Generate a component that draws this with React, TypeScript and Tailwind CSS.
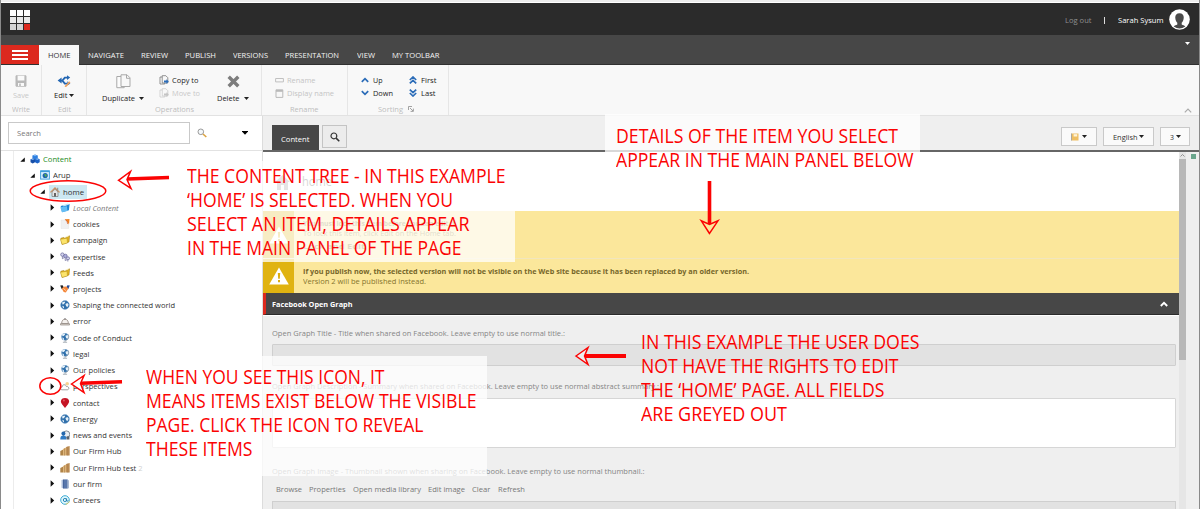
import { useLayoutEffect, useRef, type ReactNode } from "react";

/** Single line of text, condensed or widened to fill a given width. */
function Fit({ w, className = "", children }: { w: number; className?: string; children: ReactNode }) {
  const ref = useRef<HTMLSpanElement>(null);
  useLayoutEffect(() => {
    const el = ref.current;
    if (el && el.offsetWidth) {
      el.style.transform = "none";
      el.style.transform = `scaleX(${w / el.getBoundingClientRect().width})`;
    }
  }, [w]);
  return (
    <span className={"block shrink-0 whitespace-nowrap " + className} style={{ width: w }}>
      <span ref={ref} className="inline-block origin-left align-top">
        {children}
      </span>
    </span>
  );
}

function Caret({ className = "text-[#222]" }: { className?: string }) {
  return (
    <svg className={"shrink-0 " + className} width="5" height="3" viewBox="0 0 5 3">
      <path d="M0 0h5L2.5 3z" fill="currentColor" />
    </svg>
  );
}

type IconName =
  | "cubes" | "app" | "home" | "bluefolder" | "cookie" | "folder" | "people" | "hands" | "globe"
  | "bell" | "stand" | "cloud" | "pin" | "news" | "hub" | "firm" | "at";

function Globe({ r = 4.4, cy = 5 }: { r?: number; cy?: number }) {
  return (
    <>
      <circle cx="5" cy={cy} r={r} fill="#2f6fab" stroke="#7fa9cf" strokeWidth="0.5" />
      <path
        d={`M2 ${cy - 2.6}l2.4-.9.8 1.1-1.5 1.6-1.2.3zM5.4 ${cy - 1}l2-.9 1.3 1.6-1.4 2.6-1.2-1.2zM2.2 ${cy + 0.8}l1.6.5.2 1.6-.9.3z`}
        fill="#e4f0f8"
      />
    </>
  );
}

function drawIcon(name: IconName): ReactNode {
  switch (name) {
    case "cubes":
      return (
        <>
          <path d="M5 .5L7.8 1.5v2.8L5 5.5 2.4 4.3V1.5z" fill="#2d7fe0" />
          <path d="M2.7 4.4L5 5.3v2.9L2.7 9.4.5 8.2V5.3z" fill="#174fa8" />
          <path d="M7.3 4.2l2.4 1v3L7.3 9.4 5 8.2V5.2z" fill="#1b62c7" />
          <path d="M3 1.4l2-.6 2 .6-2 .8zM.9 5.3l1.8-.6 1.8.6-1.8.7zM5.5 5.1l1.8-.6 1.8.6-1.8.8z" fill="#7db6f5" />
        </>
      );
    case "app":
      return (
        <>
          <rect x=".6" y=".9" width="8.8" height="8.2" fill="#d9effc" stroke="#45a4e0" />
          <rect x=".6" y=".5" width="8.8" height="1.6" fill="#3d9ddd" />
          <circle cx="5.2" cy="5.5" r="2.6" fill="#1d64ad" />
          <path d="M4.2 4l2 .2.7 1.7-1.6 1z" fill="#58b14b" />
        </>
      );
    case "home":
      return (
        <>
          <path d="M2 5v4.5h6V5L5 2.2z" fill="#e6e6e6" stroke="#777" strokeWidth=".7" />
          <path d="M.4 5.4L5 1l4.6 4.4" fill="none" stroke="#c98f60" strokeWidth="1.3" />
          <path d="M7.2.8h1v2.6h-1z" fill="#8b8b8b" />
          <path d="M4.1 6h1.8v3.5H4.1z" fill="#555" />
        </>
      );
    case "bluefolder":
      return (
        <>
          <path d="M.7 3l3-.8.6.8L9.6 1 8.9 7.2 2 9.2z" fill="#1f87d6" />
          <path d="M.3 4.2l6.6-1 .5 4.8L2 9.2z" fill="#65bdf4" />
          <path d="M3 2.2l5-1.7.9.9-5.5 2z" fill="#c1e5fb" />
        </>
      );
    case "cookie":
      return (
        <>
          <path d="M1 1h6l1.7 2v6.6H1z" fill="#f0f0f1" stroke="#e0e0e0" strokeWidth=".4" />
          <path d="M5 .2L9.5 0 9 5.5 7.7 3.2z" fill="#f38321" />
          <path d="M5.3.4l1.9 2.3.4 2.2" stroke="#c84f21" strokeWidth=".7" fill="none" />
        </>
      );
    case "folder":
      return (
        <>
          <path d="M.8 3.2l3-.8.6.8L9.6.8 9 7 2.2 9.4z" fill="#e4b51f" stroke="#9a7514" strokeWidth=".5" />
          <path d="M.4 4.3L7 3.2 7.5 8 2 9.4z" fill="#fce46c" stroke="#b28d1d" strokeWidth=".5" />
          <path d="M5.2 2.2l3.6-1.5" stroke="#fff7ca" strokeWidth=".9" />
        </>
      );
    case "people":
      return (
        <g stroke="#626296" strokeWidth=".7">
          <circle cx="2.4" cy="2.6" r="1.7" fill="#d5d5ef" />
          <path d="M2.4 4.3v2.4l1.6-1" fill="none" />
          <circle cx="5.4" cy="4" r="1.8" fill="#aaaadb" />
          <path d="M5.2 5.8v2.7l1.8-.8" fill="none" />
          <circle cx="8" cy="6.3" r="1.5" fill="#d5d5ef" />
          <path d="M7.8 7.8v1.7" fill="none" />
        </g>
      );
    case "hands":
      return (
        <>
          <path d="M.2 1.6l2.4-.3L4 4 1.8 5.2z" fill="#222" />
          <path d="M9.8 1.6l-2.4-.3L6 4l2.2 1.2z" fill="#274b97" />
          <path d="M1.7 4.5L3.8 2.8 6.2 2.6l2.2 2L5.8 8.6 3.7 8z" fill="#f4873b" />
          <path d="M3.4 4.4l2.5 2.2" stroke="#ffd0a4" strokeWidth="1" />
        </>
      );
    case "globe":
      return <Globe />;
    case "bell":
      return (
        <>
          <path d="M1.6 7.6c.2-3 1.3-4.3 3.4-4.3s3.2 1.3 3.4 4.3z" fill="#f4f1ee" stroke="#8b7f78" strokeWidth=".8" />
          <path d="M.4 9h9.2V7.7H.4z" fill="#e7e1dc" stroke="#7d736d" strokeWidth=".6" />
          <path d="M4.3 2.3h1.4v1H4.3z" fill="#777" />
        </>
      );
    case "stand":
      return (
        <>
          <Globe r={3.5} cy={3.8} />
          <path d="M8 1.2c1.6 2.5.6 5.6-3 6.6" stroke="#8b96a1" strokeWidth=".7" fill="none" />
          <path d="M4.5 7.7h1v1h1.6v1H2.9v-1h1.6z" fill="#a8b0b8" />
        </>
      );
    case "cloud":
      return (
        <>
          <circle cx="7.2" cy="2.8" r="1.8" fill="#f7d391" />
          <path d="M2 8.8C-.1 8.5.5 6 2.2 6 2 3.2 5.8 3 6.4 5.5c2.8-.3 3.2 3 1 3.3z" fill="#fff" stroke="#868686" strokeWidth=".8" />
        </>
      );
    case "pin":
      return (
        <>
          <path d="M5 9.9L2.2 6.4C-.8 2.7 1.8.1 5 .1s5.8 2.6 2.8 6.3z" fill="#c51424" />
          <circle cx="3.9" cy="2.6" r="1" fill="#e35a66" />
        </>
      );
    case "news":
      return (
        <>
          <circle cx="6.4" cy="4.3" r="3.4" fill="#e9edf2" stroke="#66717e" strokeWidth=".8" />
          <circle cx="3.4" cy="3.6" r="2" fill="#2467ad" />
          <path d="M.3 9.6c0-3.3 1.2-4 3.1-4s3 .8 3 4z" fill="#2f7ac4" />
          <path d="M6.6 6.3h2.8v3.2H6.6z" fill="#59606a" />
        </>
      );
    case "hub":
      return (
        <>
          <path d="M.3 5l2.9-1.4v6H.3z" fill="#b08448" />
          <path d="M3 3l3-1.4v8H3z" fill="#dfb67a" />
          <path d="M6 .9L9.7 0v9.6H6z" fill="#c2935a" />
          <path d="M4.6 2.3v7.3M7.9.6v9" stroke="#94693a" strokeWidth=".5" />
        </>
      );
    case "firm":
      return (
        <>
          <path d="M1.5 1l2-.6v9L1.5 8.8z" fill="#aebfdc" />
          <path d="M3 .5h4.6v9H3z" fill="#3b5a94" />
          <path d="M7.4.5l1.4.9v7.8l-1.4.4z" fill="#93a8c9" />
          <path d="M3.6 2h3.4M3.6 4h3.4M3.6 6h3.4M3.6 8h3.4" stroke="#a3bce2" strokeWidth=".6" />
        </>
      );
    case "at":
      return (
        <>
          <circle cx="5" cy="5" r="4.3" fill="#e4f8fd" stroke="#28a1cf" strokeWidth=".9" />
          <circle cx="4.9" cy="5" r="1.6" fill="none" stroke="#187aae" strokeWidth=".9" />
          <path d="M6.6 3.3v2.8c.5.8 1.5.2 1.5-1" fill="none" stroke="#187aae" strokeWidth=".8" />
          <path d="M5.6 9.2c2-.2 3.4-1.4 3.7-3" fill="none" stroke="#e2cc62" strokeWidth=".9" />
        </>
      );
  }
}

interface Row {
  label: string;
  icon: IconName;
  w: number;
  level: number;
}

const rows: Row[] = [
  { label: "Content", icon: "cubes", w: 28.5, level: 0 },
  { label: "Arup", icon: "app", w: 17.5, level: 1 },
  { label: "home", icon: "home", w: 21, level: 2 },
  { label: "Local Content", icon: "bluefolder", w: 45.5, level: 3 },
  { label: "cookies", icon: "cookie", w: 26.5, level: 3 },
  { label: "campaign", icon: "folder", w: 34.5, level: 3 },
  { label: "expertise", icon: "people", w: 32.5, level: 3 },
  { label: "Feeds", icon: "folder", w: 21, level: 3 },
  { label: "projects", icon: "hands", w: 28.5, level: 3 },
  { label: "Shaping the connected world", icon: "globe", w: 102, level: 3 },
  { label: "error", icon: "bell", w: 18, level: 3 },
  { label: "Code of Conduct", icon: "stand", w: 59, level: 3 },
  { label: "legal", icon: "stand", w: 16.5, level: 3 },
  { label: "Our policies", icon: "stand", w: 42, level: 3 },
  { label: "perspectives", icon: "cloud", w: 44.5, level: 3 },
  { label: "contact", icon: "pin", w: 26.5, level: 3 },
  { label: "Energy", icon: "globe", w: 24.5, level: 3 },
  { label: "news and events", icon: "news", w: 59, level: 3 },
  { label: "Our Firm Hub", icon: "hub", w: 48.5, level: 3 },
  { label: "Our Firm Hub test 2", icon: "hub", w: 69.5, level: 3 },
  { label: "our firm", icon: "firm", w: 29, level: 3 },
  { label: "Careers", icon: "at", w: 27.5, level: 3 },
];

const indents = ["pl-[6px]", "pl-[16px]", "pl-[26px]", "pl-[36px]"];
const labelColors: Record<string, string> = {
  Content: "text-[#1c8a1c]",
  "Local Content": "italic text-[#777]",
};

function TreeRow({ row }: { row: Row }) {
  const selected = row.label === "home";
  return (
    <div className={"flex h-[16.24px] shrink-0 items-center " + indents[row.level]}>
      <svg width="5" height="7" viewBox="0 0 5 7" className="mr-[4px] shrink-0">
        {row.level < 3 ? <path d="M4.8 1.4v4.4H.3z" fill="#111" /> : <path d="M.6 .3l3.6 3.2L.6 6.7z" fill="#111" />}
      </svg>
      <div className={"flex h-[14px] items-center pl-[1px] pr-[3px] " + (selected ? "bg-[#cde8f2]" : "")}>
        <svg width="10" height="10" viewBox="0 0 10 10" className="mr-[3px] shrink-0">
          {drawIcon(row.icon)}
        </svg>
        <Fit w={row.w} className={labelColors[row.label] ?? "text-[#333]"}>
          {row.label}
        </Fit>
      </div>
    </div>
  );
}

function SearchGlyph() {
  return (
    <svg width="10" height="10" viewBox="0 0 10 10">
      <circle cx="3.9" cy="3.9" r="2.9" fill="none" stroke="#333" strokeWidth="1.2" />
      <path d="M6.1 6.1L9.3 9.3" stroke="#333" strokeWidth="1.5" />
    </svg>
  );
}

function TopBar() {
  return (
    <div className="flex h-[32px] shrink-0 items-center justify-between bg-[#2b2b2b] pl-[9px] pr-[9px]">
      <svg width="20" height="20" viewBox="0 0 20 20" className="mt-[2px]" shapeRendering="crispEdges">
        <path d="M0 0h6v6H0zM7 0h6v6H7zM14 0h6v6h-6z" fill="#fff" />
        <path d="M0 7h6v6H0zM7 7h6v6H7zM14 7h6v6h-6z" fill="#e9e9e9" />
        <path d="M0 14h6v6H0zM7 14h6v6H7z" fill="#d3d3d3" />
        <path d="M14 14h6v6h-6z" fill="#dc291e" />
      </svg>
      <div className="flex items-center">
        <Fit w={26.5} className="mt-[2px] text-[#8f8f8f]">Log out</Fit>
        <span className="ml-[12.5px] mr-[13px] mt-[2px] h-[7px] w-px bg-[#ddd]" />
        <Fit w={45.5} className="mt-[2px] text-white">Sarah Sysum</Fit>
        <svg width="21" height="21" viewBox="0 0 21 21" className="ml-[6px] mt-px">
          <circle cx="10.5" cy="10.5" r="10.3" fill="#fff" />
          <path
            d="M10.5 4.2c-3.2 0-4.5 2.1-4.2 4.8.1 2.2 1 3.8 2 4.8v1.8c-1.2.6-2.6 1-3.6 1.9a10 10 0 0011.6 0c-1-.9-2.4-1.3-3.6-1.9v-1.8c1-1 1.9-2.6 2-4.8.3-2.7-1-4.8-4.2-4.8z"
            fill="#4a4a4a"
          />
        </svg>
      </div>
    </div>
  );
}

const tabs: [string, number, string][] = [
  ["NAVIGATE", 36, "ml-[9px]"],
  ["REVIEW", 27, "ml-[16.5px]"],
  ["PUBLISH", 31, "ml-[17px]"],
  ["VERSIONS", 35, "ml-[17px]"],
  ["PRESENTATION", 54, "ml-[17.5px]"],
  ["VIEW", 18, "ml-[17.5px]"],
  ["MY TOOLBAR", 47.5, "ml-[17px]"],
];

function TabBar() {
  return (
    <div className="flex h-[30px] shrink-0 items-end justify-between border-b border-b-[#303030] bg-[#474747]">
      <div className="flex h-[19px] items-center text-[8px] text-[#f4f4f4]">
        <div className="flex h-[19px] w-[38px] flex-col items-center justify-center gap-[2px] bg-[#dc291e]">
          <span className="h-[2px] w-[16px] bg-white" />
          <span className="h-[2px] w-[16px] bg-white" />
          <span className="h-[2px] w-[16px] bg-white" />
        </div>
        <div className="flex h-[20px] w-[40px] items-center justify-center bg-[#f8f8f8] text-[#333]">
          <Fit w={22.5}>HOME</Fit>
        </div>
        {tabs.map(([label, w, gap]) => (
          <Fit key={label} w={w} className={gap}>
            {label}
          </Fit>
        ))}
      </div>
      <Caret className="mb-[19px] mr-[9px] text-white" />
    </div>
  );
}

function DocIcon({ badge, faded = false }: { badge: string; faded?: boolean }) {
  const c = faded ? "#c9c9c9" : "#777";
  return (
    <svg width="10" height="10" viewBox="0 0 10 10" className="mr-[2.5px] shrink-0">
      <path d="M1 2h4.8v7H1z" fill="#fff" stroke={c} strokeWidth=".8" />
      <path d="M3.2.7h3.6l2 2V8H3.2z" fill="#f8f8f8" stroke={c} strokeWidth=".8" />
      <path d="M5 5.5h2.4V4.2L9.8 6.6 7.4 9V7.6H5z" fill={badge} />
    </svg>
  );
}

function Chevrons({ up, double = false }: { up: boolean; double?: boolean }) {
  return (
    <svg width="8" height="8" viewBox="0 0 8 8" className={"mr-[4px] shrink-0 " + (up ? "" : "rotate-180")}>
      <g fill="none" stroke="#2b6cb8" strokeWidth="1.7">
        {double ? (
          <path d="M.8 4L4 1l3.2 3M.8 7.4L4 4.4l3.2 3" />
        ) : (
          <path d="M.8 5.8L4 2.6l3.2 3.2" />
        )}
      </g>
    </svg>
  );
}

function Ribbon() {
  return (
    <div className="flex h-[51px] shrink-0 justify-between border-b border-b-[#e2e2e2] bg-[#f8f8f8]">
      <div className="flex">
        <div className="flex w-[41px] flex-col items-center border-r border-r-[#e6e6e6] pt-[10px] text-[#c8c8c8]">
          <svg width="12" height="12" viewBox="0 0 12 12">
            <path d="M1 .8h10v10.4H1z" fill="#b9b9b9" stroke="#b9b9b9" strokeWidth="1" />
            <path d="M2.6.8h6.8v4.8H2.6zM3 8h6v3H3z" fill="#fafafa" />
            <path d="M4.2 8.4h1.6V11H4.2z" fill="#b9b9b9" />
          </svg>
          <Fit w={16} className="mt-[3px]">Save</Fit>
          <Fit w={18} className="mt-[4px] text-[#bdbdbd]">Write</Fit>
        </div>
        <div className="flex w-[45px] flex-col items-center border-r border-r-[#e6e6e6] pt-[10px]">
          <svg width="14" height="12" viewBox="0 0 14 12">
            <path d="M3 5.6h2.4M5.4 5.6l2.4-3h3M5.4 5.6l2.4 3h3.4" fill="none" stroke="#2467b3" strokeWidth="1.8" />
            <path d="M4.6 2.6L.6 5.6l4 3zM10 .2l3.2 2.4L10 5zM10.4 6.2l3 2.4-3 2z" fill="#2467b3" />
            <path d="M8.2 11.8l4.6-5" stroke="#eea15d" strokeWidth="1.7" />
          </svg>
          <div className="mt-[3px] flex items-center gap-[1px] text-[#222]">
            <Fit w={13.5}>Edit</Fit>
            <Caret />
          </div>
          <Fit w={13} className="mt-[4px] text-[#bdbdbd]">Edit</Fit>
        </div>
        <div className="flex w-[175px] flex-col border-r border-r-[#e6e6e6] pt-[9px] text-[#222]">
          <div className="flex h-[30px] pl-[15px]">
            <div className="flex w-[42px] flex-col items-center">
              <svg width="15" height="15" viewBox="0 0 15 15">
                <path d="M.8 2.5h7.4v11.2H.8z" fill="#fcfcfc" stroke="#a9a9a9" />
                <path d="M5 .8h6l3 3v8.7H5z" fill="#f8f8f8" stroke="#a9a9a9" />
                <path d="M10.5.8v3.5H14" fill="none" stroke="#a9a9a9" />
              </svg>
              <div className="mt-[4px] flex items-center gap-[4px]">
                <Fit w={33}>Duplicate</Fit>
                <Caret />
              </div>
            </div>
            <div className="ml-[15px] flex w-[42px] flex-col gap-[3px] pt-px">
              <div className="flex items-center">
                <DocIcon badge="#2b6cb8" />
                <Fit w={26.5}>Copy to</Fit>
              </div>
              <div className="flex items-center text-[#c8c8c8]">
                <DocIcon badge="#c4c4c4" faded />
                <Fit w={28}>Move to</Fit>
              </div>
            </div>
            <div className="ml-[16px] flex w-[32px] flex-col items-center">
              <svg width="13" height="13" viewBox="0 0 13 13" className="mt-px">
                <path d="M1.7 1.7l9.6 9.6M11.3 1.7l-9.6 9.6" stroke="#7d7d7d" strokeWidth="3.4" />
              </svg>
              <div className="mt-[5px] flex items-center gap-[5px]">
                <Fit w={22.5}>Delete</Fit>
                <Caret />
              </div>
            </div>
          </div>
          <Fit w={39} className="ml-[68px] text-[#bdbdbd]">Operations</Fit>
        </div>
        <div className="flex w-[86px] flex-col border-r border-r-[#e6e6e6] pl-[13px] pt-[10px] text-[#c4c4c4]">
          <div className="flex items-center">
            <svg width="9" height="8" viewBox="0 0 9 8" className="mr-[3px]">
              <path d="M.6 2.5h7.8v3.4H.6z" fill="none" stroke="#c0c0c0" />
            </svg>
            <Fit w={28.5}>Rename</Fit>
          </div>
          <div className="mt-[3px] flex items-center">
            <svg width="9" height="9" viewBox="0 0 9 9" className="mr-[3px]">
              <path d="M1 .8h6.8v7.6H1z" fill="none" stroke="#b9b9b9" />
              <path d="M1 1h6.8v1.8H1z" fill="#b9b9b9" />
            </svg>
            <Fit w={47}>Display name</Fit>
          </div>
          <Fit w={28.5} className="ml-[15px] mt-[6px] text-[#bdbdbd]">Rename</Fit>
        </div>
        <div className="flex w-[101px] flex-col border-r border-r-[#e6e6e6] pl-[13px] pt-[10px] text-[#222]">
          <div className="flex">
            <div className="flex w-[48px] flex-col gap-[3px]">
              <div className="flex items-center"><Chevrons up /><Fit w={9.5}>Up</Fit></div>
              <div className="flex items-center"><Chevrons up={false} /><Fit w={20}>Down</Fit></div>
            </div>
            <div className="flex flex-col gap-[3px]">
              <div className="flex items-center"><Chevrons up double /><Fit w={15.5}>First</Fit></div>
              <div className="flex items-center"><Chevrons up={false} double /><Fit w={14.5}>Last</Fit></div>
            </div>
          </div>
          <div className="ml-[17px] mt-[6px] flex items-center text-[#bdbdbd]">
            <Fit w={25}>Sorting</Fit>
            <svg width="6" height="6" viewBox="0 0 6 6" className="ml-[5px]">
              <path d="M.5 4V.5H4M2 2l3 3M5.4 2.6v2.8H2.6" fill="none" stroke="#999" strokeWidth=".9" />
            </svg>
          </div>
        </div>
      </div>
      <svg width="8" height="5" viewBox="0 0 8 5" className="mr-[7px] mt-[43px]">
        <path d="M.8 4.4L4 1.2l3.2 3.2" fill="none" stroke="#aaa" strokeWidth="1.2" />
      </svg>
    </div>
  );
}

function Sidebar() {
  return (
    <div className="flex w-[261px] shrink-0 flex-col bg-white">
      <div className="flex h-[35px] shrink-0 items-center border-b border-b-[#e2e2e2] pl-[7px]">
        <div className="flex h-[22px] w-[182px] items-center border border-[#c9c9c9] pl-[8px] text-[#777]">
          <Fit w={24}>Search</Fit>
        </div>
        <svg width="10" height="10" viewBox="0 0 10 10" className="ml-[7px]">
          <circle cx="3.8" cy="3.8" r="2.8" fill="#f4f8fb" stroke="#9a9a9a" strokeWidth="1" />
          <path d="M6 6l3.3 3" stroke="#dba341" strokeWidth="1.6" />
        </svg>
        <svg width="6" height="4" viewBox="0 0 6 4" className="ml-[35px]">
          <path d="M0 0h6v.6L3 3.8 0 .6z" fill="#000" />
        </svg>
      </div>
      <div className="ml-[12px] flex min-h-0 flex-1 flex-col overflow-hidden border-l border-l-[#ececec]">
        {rows.map((row) => (
          <TreeRow key={row.label} row={row} />
        ))}
      </div>
    </div>
  );
}

function WarningBox() {
  return (
    <div className="flex w-[31px] shrink-0 items-center justify-center bg-[#e0b311]">
      <svg width="20" height="18" viewBox="0 0 20 18">
        <path d="M10 .5L19.8 17.5H.2z" fill="#fff" />
        <path d="M8.8 6h2.4l-.4 5.8H9.2zM9 13.1h2v2.2H9z" fill="#dcae10" />
      </svg>
    </div>
  );
}

function ToolButton({ className, children }: { className: string; children: ReactNode }) {
  return (
    <div className={"flex h-[19px] items-center justify-center gap-[2px] border border-[#c9c9c9] bg-[#fafafa] text-[#333] " + className}>
      {children}
    </div>
  );
}

const links: [string, number][] = [
  ["Browse", 26],
  ["Properties", 36.5],
  ["Open media library", 68],
  ["Edit image", 37],
  ["Clear", 18.5],
  ["Refresh", 27],
];

function MainPanel() {
  return (
    <div className="flex min-w-0 flex-1 flex-col border-l border-l-[#dcdcdc] bg-[#efefef]">
      <div className="flex h-[36px] shrink-0 items-end justify-between border-b-2 border-b-[#666] pl-[9px] pr-[9px]">
        <div className="flex">
          <div className="flex h-[25px] w-[47px] items-center justify-center bg-[#474747] pt-[2px] text-white">
            <Fit w={28.5}>Content</Fit>
          </div>
          <div className="ml-[3px] flex h-[23px] w-[25px] items-center justify-center border border-[#c4c4c4] bg-[#ececec]">
            <SearchGlyph />
          </div>
        </div>
        <div className="mb-[4px] flex gap-[6px]">
          <ToolButton className="w-[36px]">
            <svg width="8" height="8" viewBox="0 0 8 8" className="mr-[1px]">
              <path d="M.8.5h6.7v7H.8z" fill="#efbf63" />
              <path d="M2.6 1.2h3.6v2.3H2.6z" fill="#fff4d9" />
              <path d="M.5.4v7.2" stroke="#9b968b" strokeWidth=".8" />
            </svg>
            <Caret />
          </ToolButton>
          <ToolButton className="w-[51px]">
            <Fit w={24.5}>English</Fit>
            <Caret />
          </ToolButton>
          <ToolButton className="w-[30px]">
            <Fit w={4}>3</Fit>
            <Caret />
          </ToolButton>
        </div>
      </div>
      <div className="flex min-h-0 flex-1">
        <div className="flex w-[916px] shrink-0 flex-col overflow-hidden">
          <div className="flex h-[59px] shrink-0 items-center bg-white pl-[12px] text-[#555]">
            <svg width="15" height="16" viewBox="0 0 15 16">
              <path d="M0 8l7.5-7L15 8h-2v8H9v-5H6v5H2V8z" fill="#999" />
            </svg>
            <Fit w={30} className="ml-[12px] text-[12px] leading-[14px]">home</Fit>
          </div>
          <div className="flex h-[48px] shrink-0 border-b border-b-[#f1e6bd] bg-[#fbe79b]">
            <WarningBox />
            <div className="flex flex-col pl-[9px] pt-[7px] text-[#85742c]">
              <Fit w={154} className="font-bold">You must lock this item before you can edit it.</Fit>
              <Fit w={153}>To lock this item, click Edit on the Home tab.</Fit>
              <Fit w={62} className="mt-[3px] font-bold">Lock and Edit</Fit>
            </div>
          </div>
          <div className="flex h-[34px] shrink-0 bg-[#fbe79b]">
            <WarningBox />
            <div className="flex flex-col pl-[9px] pt-[7px] text-[#85742c]">
              <Fit w={446} className="font-bold text-[#76662a]">
                If you publish now, the selected version will not be visible on the Web site because it has been replaced by an older version.
              </Fit>
              <Fit w={123}>Version 2 will be published instead.</Fit>
            </div>
          </div>
          <div className="flex h-[22px] shrink-0 items-center justify-between border-b border-l-[3px] border-b-[#2b2b2b] border-l-[#dc291e] bg-[#474747] pl-[6px] pr-[11px]">
            <Fit w={80.5} className="font-bold text-white">Facebook Open Graph</Fit>
            <svg width="8" height="6" viewBox="0 0 8 6">
              <path d="M.8 5L4 1.8 7.2 5" fill="none" stroke="#fff" strokeWidth="1.9" />
            </svg>
          </div>
          <div className="flex flex-1 flex-col border-t border-t-white pl-[9px] pr-[3px] pt-[12px] text-[#858585]">
            <Fit w={293}>Open Graph Title - Title when shared on Facebook. Leave empty to use normal title.:</Fit>
            <div className="mt-[6px] h-[22px] shrink-0 rounded-[1px] border border-[#cfcfcf] bg-[#e2e2e2]" />
            <Fit w={387} className="mt-[15px]">
              Open Graph Description - Summary when shared on Facebook. Leave empty to use normal abstract summary.:
            </Fit>
            <div className="mt-[7px] h-[50px] shrink-0 rounded-[1px] border border-[#d6d6d6] bg-white" />
            <Fit w={372.5} className="mt-[18px]">
              Open Graph Image - Thumbnail shown when sharing on Facebook. Leave empty to use normal thumbnail.:
            </Fit>
            <div className="mt-[8px] flex gap-[7.3px] pl-[3.5px] text-[#777]">
              {links.map(([label, w]) => (
                <Fit key={label} w={w}>{label}</Fit>
              ))}
            </div>
            <div className="mt-[7px] h-[22px] shrink-0 border border-[#cfcfcf] bg-[#e2e2e2]" />
          </div>
        </div>
        <div className="flex w-[7px] shrink-0 flex-col items-center bg-[#e6e6e6]">
          <svg width="5" height="7" viewBox="0 0 5 7" className="shrink-0">
            <path d="M.5 4.5l2-2 2 2" fill="none" stroke="#888" strokeWidth=".9" />
          </svg>
          <div className="h-[201px] w-[7px] bg-[#b8b8b8]" />
        </div>
        <div className="flex-1 pl-[4.5px] pt-[2px]">
          <div className="size-[5px] bg-[#6aa58c]" />
        </div>
      </div>
    </div>
  );
}

interface NoteData {
  box: string;
  lines: [string, number][];
}

const notes: NoteData[] = [
  {
    box: "left-[183px] top-[161px] h-[101px] w-[332px] bg-white/75 pl-[3.5px] pt-[3px]",
    lines: [
      ["THE CONTENT TREE - IN THIS EXAMPLE", 318.5],
      ["‘HOME’ IS SELECTED. WHEN YOU", 266],
      ["SELECT AN ITEM, DETAILS APPEAR", 282.5],
      ["IN THE MAIN PANEL OF THE PAGE", 274.5],
    ],
  },
  {
    box: "left-[605px] top-[114px] h-[64px] w-[315px] bg-white/75 pl-[10.5px] pt-[10px]",
    lines: [
      ["DETAILS OF THE ITEM YOU SELECT", 282],
      ["APPEAR IN THE MAIN PANEL BELOW", 297.5],
    ],
  },
  {
    box: "left-[641px] top-[330px]",
    lines: [
      ["IN THIS EXAMPLE THE USER DOES", 278.5],
      ["NOT HAVE THE RIGHTS TO EDIT", 257.5],
      ["THE ‘HOME’ PAGE. ALL FIELDS", 243.5],
      ["ARE GREYED OUT", 146],
    ],
  },
  {
    box: "left-[137px] top-[356px] h-[120px] w-[350px] bg-white/75 pl-[9px] pt-[9px]",
    lines: [
      ["WHEN YOU SEE THIS ICON, IT", 238.5],
      ["MEANS ITEMS EXIST BELOW THE VISIBLE", 330.5],
      ["PAGE. CLICK THE ICON TO REVEAL", 277.5],
      ["THESE ITEMS", 106.5],
    ],
  },
];

function Annotations() {
  return (
    <>
      {notes.map((note) => (
        <div
          key={note.box}
          className={"absolute flex flex-col font-['Open_Sans','Noto_Sans',sans-serif] text-[20px] leading-[24px] text-[#fb0303] " + note.box}
        >
          {note.lines.map(([line, w]) => (
            <Fit key={line} w={w}>{line}</Fit>
          ))}
        </div>
      ))}
      <svg className="pointer-events-none absolute left-0 top-0" width="1200" height="509" viewBox="0 0 1200 509">
        <g fill="none" stroke="#fb0303" strokeMiterlimit="12">
          <ellipse cx="68" cy="191" rx="37.8" ry="10.3" strokeWidth="1.5" />
          <ellipse cx="50.3" cy="386" rx="10.5" ry="8.3" strokeWidth="1.5" />
          <path d="M169 177.5L127 179" strokeWidth="3.6" />
          <path d="M118.5 180.3L130.5 171.5 127 179.6 131 188.5z" fill="#fff" strokeWidth="1.5" />
          <path d="M122 381.7L81 383.2" strokeWidth="3.6" />
          <path d="M71.5 384L84 375.5 80.5 383.5 84 392.5z" fill="#fff" strokeWidth="1.5" />
          <path d="M626 356H584.5" strokeWidth="3.8" />
          <path d="M576 356L588 347.5 584.5 356 588 364.5z" fill="#eee" strokeWidth="1.5" />
          <path d="M709.5 181V224" strokeWidth="3.6" />
          <path d="M709.5 233.5L701.3 220.8 709.5 224.5 718 220.8z" fill="#fbe79b" strokeWidth="1.5" />
        </g>
      </svg>
    </>
  );
}

export default function App() {
  return (
    <div className="relative flex h-[509px] w-[1200px] flex-col overflow-hidden border-l border-r border-l-[#8a8a8a] border-r-[#8a8a8a] bg-[#efefef] font-['Open_Sans','Noto_Sans',sans-serif] text-[7.7px] leading-[10px]">
      <div className="h-[3px] shrink-0 border-b border-b-white bg-[#ececec]" />
      <TopBar />
      <TabBar />
      <Ribbon />
      <div className="flex min-h-0 flex-1">
        <Sidebar />
        <MainPanel />
      </div>
      <div className="pointer-events-none absolute -left-px top-0 h-[509px] w-[1200px]">
        <Annotations />
      </div>
    </div>
  );
}
